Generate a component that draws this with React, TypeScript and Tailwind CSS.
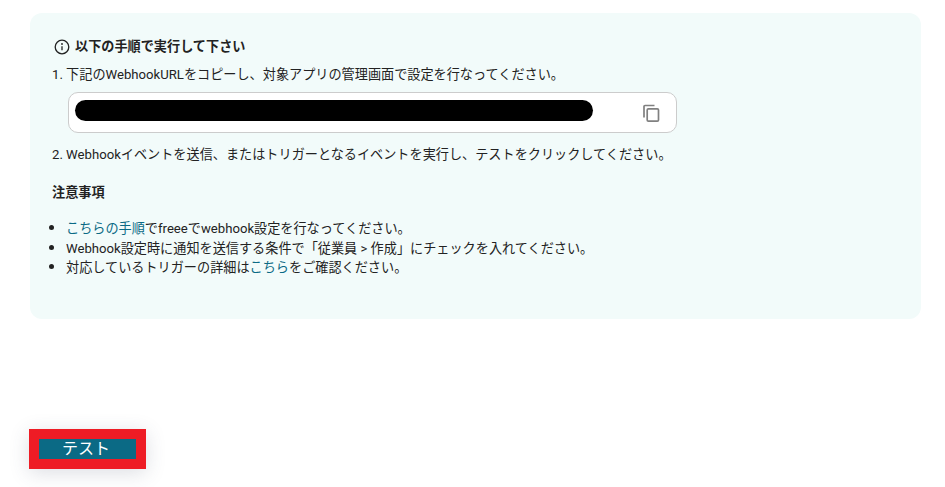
const App = () => {
  return (
    <div className="w-[945px] h-[487px] bg-white text-[#222222] text-[13.15px] overflow-hidden flex flex-col items-start pl-[29px] pt-[13px] font-['Roboto','Noto_Sans_CJK_JP',sans-serif]">
      <div className="w-[891px] h-[306px] ml-px bg-[#f2fbfa] rounded-xl pl-[22px] pt-[25px] flex flex-col items-start">
        <div className="flex items-center gap-[5px] h-[18px] ml-[2px] font-bold">
          <svg className="w-[16px] h-[16px]" viewBox="0 0 16 16" fill="none" stroke="#222222" strokeWidth="1.3">
            <circle cx="8" cy="8" r="6.8" />
            <path d="M8 7.2v4" />
            <circle cx="8" cy="5" r="0.9" fill="#222222" stroke="none" />
          </svg>
          <span>以下の手順で実行して下さい</span>
        </div>
        <p className="mt-[9px] leading-[20px]">1. 下記のWebhookURLをコピーし、対象アプリの管理画面で設定を行なってください。</p>
        <div className="mt-[7px] ml-[16px] w-[609px] h-[41px] bg-white border border-[#cccccc] rounded-[10px] flex items-center justify-between pl-[6px] pr-[15px]">
          <div className="w-[518px] h-[21px] mb-[4px] bg-black rounded-full"></div>
          <svg className="w-[20px] h-[20px]" viewBox="0 0 20 20" fill="none" stroke="#808080" strokeWidth="1.7">
            <path d="M3 14.5V3.5A1 1 0 0 1 4 2.5h9.5" />
            <rect x="6.2" y="5.8" width="11.3" height="12.4" rx="1.2" />
          </svg>
        </div>
        <p className="mt-[12px] leading-[20px]">2. Webhookイベントを送信、またはトリガーとなるイベントを実行し、テストをクリックしてください。</p>
        <p className="mt-[18px] leading-[20px] font-bold">注意事項</p>
        <ul className="mt-[15px] list-disc pl-[14px] leading-[19.5px] marker:text-[16px]">
          <li className="h-[19.5px]"><a className="text-[#0b6a85]">こちらの手順</a>でfreeeでwebhook設定を行なってください。</li>
          <li className="h-[19.5px]">Webhook設定時に通知を送信する条件で「従業員 &gt; 作成」にチェックを入れてください。</li>
          <li className="h-[19.5px]">対応しているトリガーの詳細は<a className="text-[#0b6a85]">こちら</a>をご確認ください。</li>
        </ul>
      </div>
      <button className="mt-[110px] w-[117px] h-[40px] border-[10px] border-[#ee1c25] bg-[#0b6a85] text-white text-[16px] leading-[18px] pr-[3px] flex items-center justify-center shadow-[0_4px_20px_rgba(60,70,100,0.18)]">
        テスト
      </button>
    </div>
  );
};

export default App;
